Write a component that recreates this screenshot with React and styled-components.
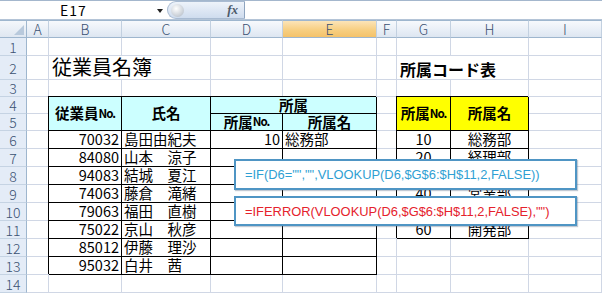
import React from "react";
import styled, { createGlobalStyle } from "styled-components";

const GlobalStyle = createGlobalStyle`
  html, body { margin: 0; padding: 0; background: #fff; }
  body {
    width: 602px;
    height: 293px;
    overflow: hidden;
    font-family: "Noto Sans CJK JP", "Noto Sans", sans-serif;
  }
`;

const COLS = [27, 22, 73, 89, 72, 94, 20, 54, 78, 73];
const ROWS = [18, 18, 24, 17, 17, 17, 18, 18, 18, 18, 18, 18, 18, 18, 18];
const LETTERS = ["A", "B", "C", "D", "E", "F", "G", "H", "I"];

const Window = styled.div`
  width: 602px;
  height: 293px;
  overflow: hidden;
  display: flex;
  flex-direction: column;
`;

const FormulaBar = styled.div`
  height: 23px;
  box-sizing: border-box;
  border-top: 1px solid #a4b7cd;
  background: #e3eaf3;
  display: flex;
  flex-direction: column;
`;

const BarRow = styled.div`
  height: 18px;
  display: flex;
  background: #fff;
  border-bottom: 1px solid #b4c4d7;
`;

const NameBox = styled.div`
  width: 167px;
  display: flex;
  align-items: center;
  position: relative;
  font-size: 14px;
  color: #000;
  padding-left: 60px;
  box-sizing: border-box;
  letter-spacing: 1px;
`;

const Arrow = styled.span`
  position: absolute;
  left: 157px;
  top: 8px;
  width: 0;
  height: 0;
  border-left: 3.5px solid transparent;
  border-right: 3.5px solid transparent;
  border-top: 4px solid #222;
`;

const FxPill = styled.div`
  width: 78px;
  display: flex;
  align-items: center;
  justify-content: space-between;
  box-sizing: border-box;
  border: 1px solid #a9bbd2;
  border-right-color: #8ea4bf;
  border-radius: 10px 0 0 10px;
  background: linear-gradient(#eef3fa, #cfdcee);
  padding: 0 6px 0 3px;
`;

const Knob = styled.span`
  width: 13px;
  height: 13px;
  border-radius: 50%;
  background: radial-gradient(circle at 40% 35%, #ffffff, #c6ccd4 70%, #9aa4b0);
`;

const Fx = styled.span`
  font-family: "Liberation Serif", serif;
  font-style: italic;
  font-weight: bold;
  font-size: 13px;
  color: #4d5a6a;
`;

const FormulaInput = styled.div`
  flex: 1;
  background: #fff;
`;

const Sheet = styled.div`
  position: relative;
  display: grid;
  grid-template-columns: ${COLS.map((c) => c + "px").join(" ")};
  grid-template-rows: ${ROWS.map((r) => r + "px").join(" ")};
  font-size: 14.5px;
  color: #000;
`;

const Corner = styled.div`
  grid-column: 1;
  grid-row: 1;
  position: relative;
  box-sizing: border-box;
  background: linear-gradient(#f4f7fb, #dfe7f1);
  border-right: 1px solid #9eb6ce;
  border-bottom: 1px solid #9eb6ce;
  border-top: 1px solid #9eb6ce;
  &::after {
    content: "";
    position: absolute;
    right: 2px;
    bottom: 2px;
    border-left: 10px solid transparent;
    border-bottom: 10px solid #b8c9dc;
  }
`;

const ColHead = styled.div`
  grid-column: ${(p) => p.$col};
  grid-row: 1;
  box-sizing: border-box;
  display: flex;
  align-items: center;
  justify-content: center;
  font-size: 14px;
  font-weight: 300;
  color: #3a5172;
  border-top: 1px solid #9eb6ce;
  border-right: 1px solid #c2d0e0;
  border-bottom: 1px solid #9eb6ce;
  background: ${(p) =>
    p.$active
      ? "linear-gradient(#fbe4b8, #f7cf82 55%, #f4c26a)"
      : "linear-gradient(#f7f9fc, #e9eff7 55%, #dde6f1)"};
`;

const RowHead = styled.div`
  grid-column: 1;
  grid-row: ${(p) => p.$row};
  box-sizing: border-box;
  display: flex;
  align-items: center;
  justify-content: center;
  font-size: 14px;
  font-weight: 300;
  color: #3a5172;
  background: #e4ecf7;
  border-right: 1px solid #9eb6ce;
  border-bottom: 1px solid #c5d3e3;
`;

const Grid = styled.div`
  grid-column: ${(p) => p.$col};
  grid-row: ${(p) => p.$row};
  box-sizing: border-box;
  border-right: 1px solid #d0d7e5;
  border-bottom: 1px solid #d0d7e5;
`;

const Cell = styled.div`
  grid-column: ${(p) => p.$col};
  grid-row: ${(p) => p.$row};
  box-sizing: border-box;
  display: flex;
  align-items: center;
  justify-content: ${(p) => p.$align || "flex-start"};
  padding: 0 2px;
  white-space: nowrap;
  line-height: 1;
  font-weight: ${(p) => (p.$bold ? 700 : 400)};
  background: ${(p) => p.$bg || "#fff"};
  border-right: 1px solid ${(p) => (p.$boxed ? "#000" : "#d0d7e5")};
  border-bottom: 1px solid ${(p) => (p.$boxed ? "#000" : "#d0d7e5")};
  box-shadow: ${(p) => (p.$boxed ? "-1px -1px 0 #000" : "none")};
`;

const Title = styled(Cell)`
  font-size: ${(p) => p.$size}px;
  font-weight: ${(p) => (p.$bold ? 700 : 400)};
  align-items: flex-end;
  padding: 0 0 2px 3px;
`;

const No = styled.span`
  font-size: 0.8em;
  letter-spacing: -1px;
`;

const Callout = styled.div`
  position: absolute;
  left: 234px;
  top: ${(p) => p.$top}px;
  width: 343px;
  height: ${(p) => p.$h}px;
  box-sizing: border-box;
  background: #fff;
  border: 2px solid #4f95c4;
  box-shadow: 1px 1px 1px rgba(80, 100, 130, 0.35);
  display: flex;
  align-items: center;
  padding-left: 9px;
  font-family: "Liberation Sans", Arial, sans-serif;
  font-size: 12.9px;
  color: ${(p) => p.$color};
  white-space: nowrap;
`;

const employees = [
  ["70032", "島田由紀夫"],
  ["84080", "山本　涼子"],
  ["94083", "結城　夏江"],
  ["74063", "藤倉　滝緒"],
  ["79063", "福田　直樹"],
  ["75022", "京山　秋彦"],
  ["85012", "伊藤　理沙"],
  ["95032", "白井　茜"],
];

const depts = [
  ["10", "総務部"],
  ["20", "経理部"],
  ["30", "人事部"],
  ["40", "営業部"],
  ["50", "企画部"],
  ["60", "開発部"],
];

// sheet row n sits on grid row n + 1
const r = (n) => n + 1;

export default function App() {
  const gridCells = [];
  for (let row = 1; row <= 14; row++) {
    for (let c = 2; c <= 10; c++) {
      gridCells.push(<Grid key={`${row}-${c}`} $col={c} $row={r(row)} />);
    }
  }

  return (
    <Window>
      <GlobalStyle />
      <FormulaBar>
        <BarRow>
          <NameBox>
            E17
            <Arrow />
          </NameBox>
          <FxPill>
            <Knob />
            <Fx>fx</Fx>
          </FxPill>
          <FormulaInput />
        </BarRow>
      </FormulaBar>

      <Sheet>
        <Corner />
        {LETTERS.map((l, i) => (
          <ColHead key={l} $col={i + 2} $active={l === "E"}>
            {l}
          </ColHead>
        ))}
        {Array.from({ length: 14 }, (_, i) => (
          <RowHead key={i} $row={r(i + 1)}>
            {i + 1}
          </RowHead>
        ))}
        {gridCells}

        <Title $col="3 / 5" $row={r(2)} $size={20}>
          従業員名簿
        </Title>
        <Title $col="8 / 10" $row={r(2)} $size={16} $bold>
          所属コード表
        </Title>

        <Cell $col={3} $row={`${r(4)} / ${r(6)}`} $align="center" $bg="#ccffff" $bold $boxed>
          従業員<No>No.</No>
        </Cell>
        <Cell $col={4} $row={`${r(4)} / ${r(6)}`} $align="center" $bg="#ccffff" $bold $boxed>
          氏名
        </Cell>
        <Cell $col="5 / 7" $row={r(4)} $align="center" $bg="#ccffff" $bold $boxed>
          所属
        </Cell>
        <Cell $col={5} $row={r(5)} $align="center" $bg="#ccffff" $bold $boxed>
          所属<No>No.</No>
        </Cell>
        <Cell $col={6} $row={r(5)} $align="center" $bg="#ccffff" $bold $boxed>
          所属名
        </Cell>

        {employees.map(([id, name], i) => (
          <React.Fragment key={id}>
            <Cell $col={3} $row={r(6 + i)} $align="flex-end" $boxed>
              {id}
            </Cell>
            <Cell $col={4} $row={r(6 + i)} $boxed>
              {name}
            </Cell>
            <Cell $col={5} $row={r(6 + i)} $align="flex-end" $boxed>
              {i === 0 ? "10" : ""}
            </Cell>
            <Cell $col={6} $row={r(6 + i)} $boxed>
              {i === 0 ? "総務部" : ""}
            </Cell>
          </React.Fragment>
        ))}

        <Cell $col={8} $row={`${r(4)} / ${r(6)}`} $align="center" $bg="#ffff00" $bold $boxed>
          所属<No>No.</No>
        </Cell>
        <Cell $col={9} $row={`${r(4)} / ${r(6)}`} $align="center" $bg="#ffff00" $bold $boxed>
          所属名
        </Cell>
        {depts.map(([no, name], i) => (
          <React.Fragment key={no}>
            <Cell $col={8} $row={r(6 + i)} $align="center" $boxed>
              {no}
            </Cell>
            <Cell $col={9} $row={r(6 + i)} $align="center" $boxed>
              {name}
            </Cell>
          </React.Fragment>
        ))}

        <Callout $top={139} $h={31} $color="#2f9fd3">
          =IF(D6="","",VLOOKUP(D6,$G$6:$H$11,2,FALSE))
        </Callout>
        <Callout $top={176} $h={30} $color="#e5222c">
          =IFERROR(VLOOKUP(D6,$G$6:$H$11,2,FALSE),"")
        </Callout>
      </Sheet>
    </Window>
  );
}
